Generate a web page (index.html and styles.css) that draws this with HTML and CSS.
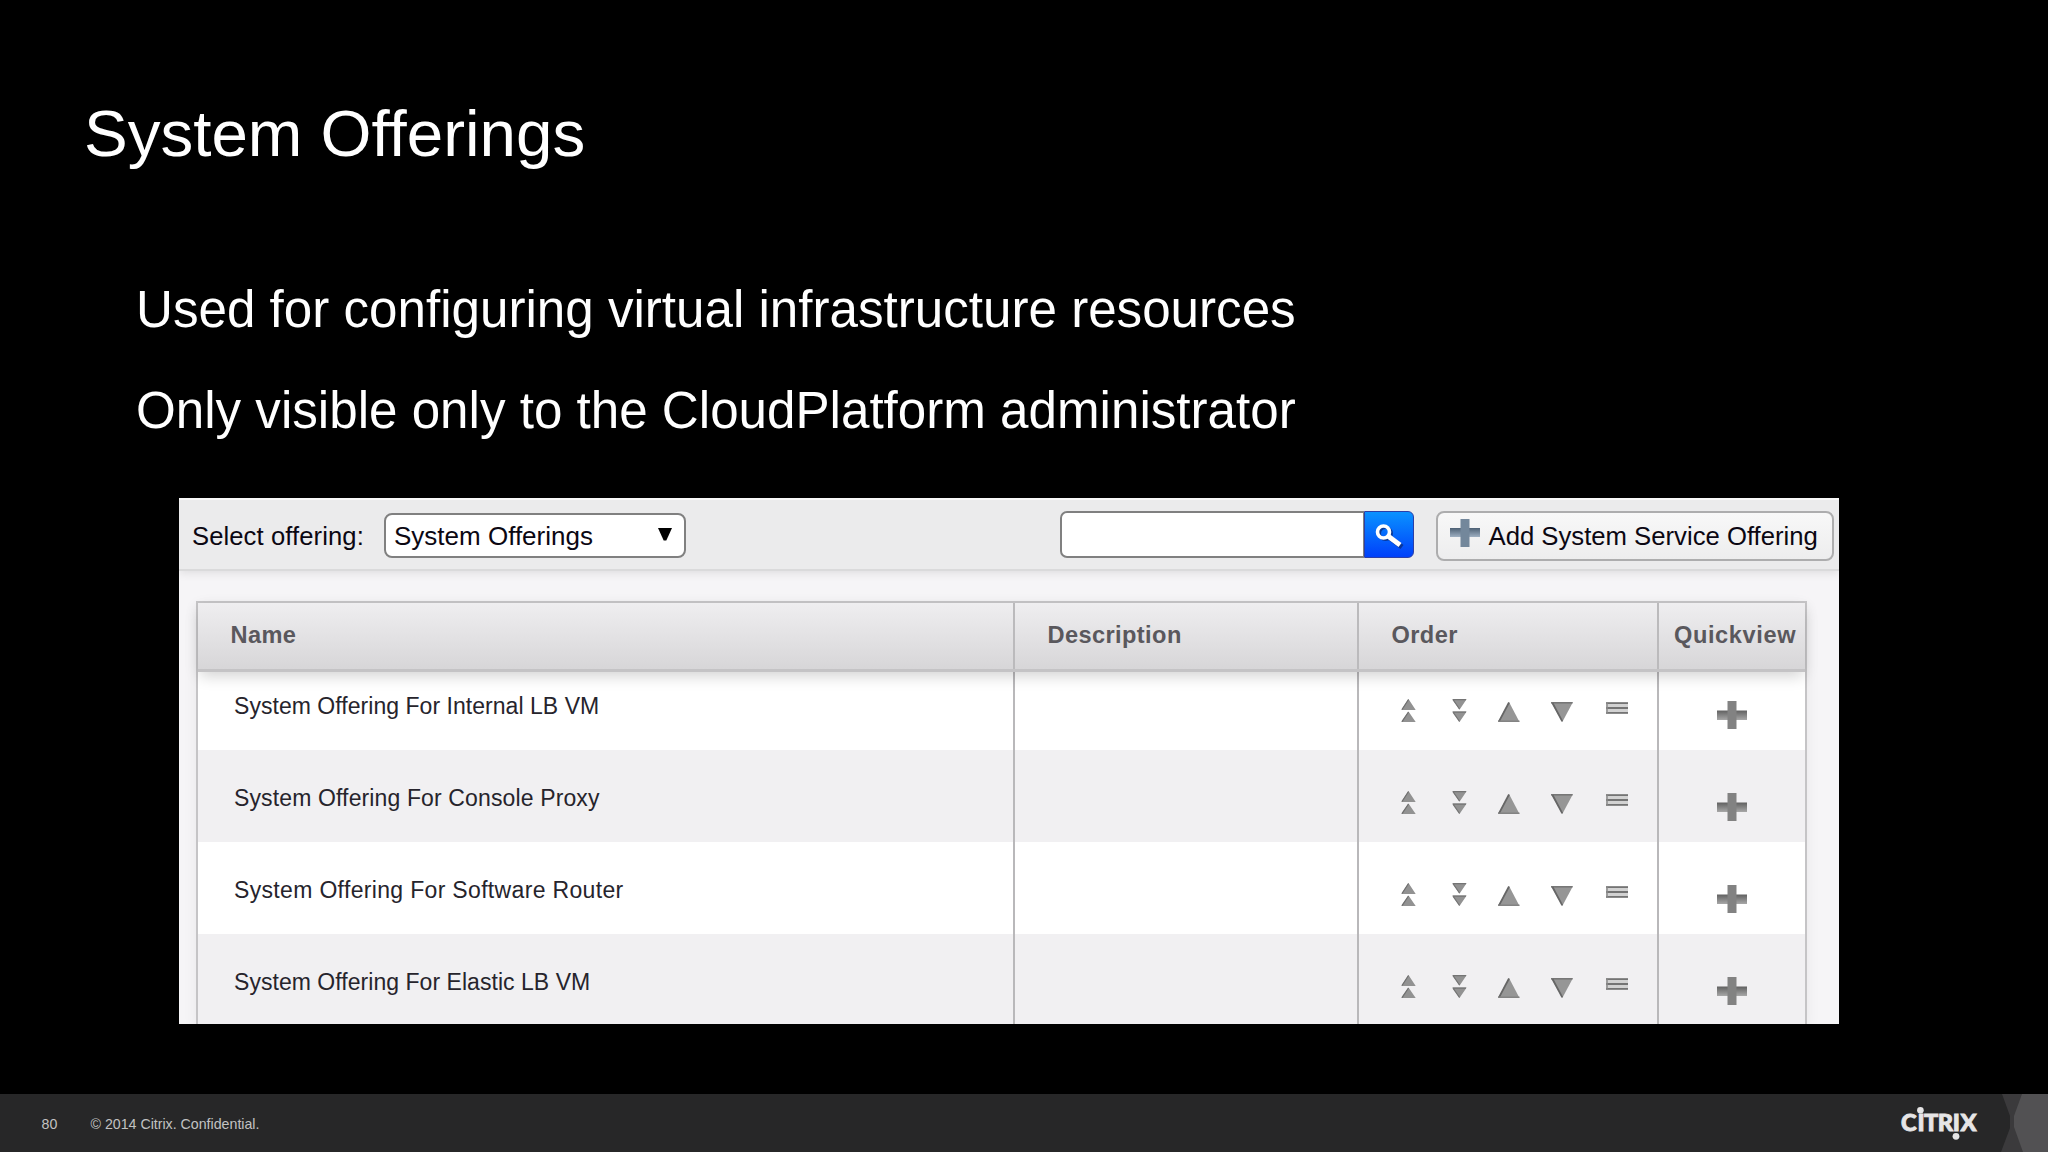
FILE: index.html
```html
<!DOCTYPE html>
<html lang="en">
<head>
<meta charset="utf-8">
<title>System Offerings</title>
<link rel="stylesheet" href="styles.css">
</head>
<body>
<svg class="defs" width="0" height="0" aria-hidden="true">
  <defs>
    <linearGradient id="bar" x1="0" y1="0" x2="0" y2="1"><stop offset="0" stop-color="#606060"/><stop offset="1" stop-color="#a8a8a8"/></linearGradient>
    <linearGradient id="bluebar" x1="0" y1="0" x2="0" y2="1"><stop offset="0" stop-color="#4d6074"/><stop offset="1" stop-color="#9fb0c2"/></linearGradient>
  </defs>
  <symbol id="top" viewBox="0 0 15 23"><path d="M7.5 0 14.7 11H0.3ZM7.5 12.5 14.7 23H0.3Z" fill="#929292"/><path d="M7.5 .5 1 10.5M7.5 13 1 22.7" stroke="#707070" stroke-width="1.3"/></symbol>
  <symbol id="bottom" viewBox="0 0 15 23"><path d="M0.3 0H14.7L7.5 10.7ZM0.3 12.5H14.7L7.5 23Z" fill="#929292"/><path d="M.8 .7H14M1 .7 7.5 10M.8 13.2H14M1 13.2 7.5 22.5" stroke="#747474" stroke-width="1.2"/></symbol>
  <symbol id="up" viewBox="0 0 22 20"><path d="M11 0 21.5 20H0Z" fill="#969696"/><path d="M11 .5 1 19.3" stroke="#666" stroke-width="1.8"/><path d="M0 19.2H21.5" stroke="#808080" stroke-width="1.3"/></symbol>
  <symbol id="down" viewBox="0 0 22 20"><path d="M0 0H22L11.3 20Z" fill="#969696"/><path d="M0 .8H21.5" stroke="#777" stroke-width="1.6"/><path d="M1.5 1 11.3 19.3" stroke="#666" stroke-width="1.8"/></symbol>
  <symbol id="drag" viewBox="0 0 22 12"><path d="M0 0H22V12H0Z" fill="#d2d2d2"/><path d="M0 1.2H22M0 6H22M0 10.8H22" stroke="#747474" stroke-width="1.8"/><path d="M1 0V12" stroke="#8a8a8a" stroke-width="1.5"/></symbol>
  <symbol id="plus" viewBox="0 0 30 28"><path d="M0 9.5H30V19H0Z" fill="url(#bar)"/><path d="M10.5 0H19.5V28H10.5Z" fill="#828282"/></symbol>
</svg>
<main class="slide">
  <h1 class="title">System Offerings</h1>
  <div class="points">
    <p class="point">Used for configuring virtual infrastructure resources</p>
    <p class="point">Only visible only to the CloudPlatform administrator</p>
  </div>
  <section class="panel">
    <div class="toolbar">
      <span class="label">Select offering:</span>
      <div class="select"><span>System Offerings</span><svg width="14" height="13" viewBox="0 0 14 13"><path d="M0 0H14L8.3 12.5H5.7Z" fill="#000"/></svg></div>
      <div class="search"><div class="field"></div><div class="go"><svg width="32" height="28" viewBox="0 0 32 28" fill="none"><g stroke="#0a2f84" opacity=".8"><circle cx="12.5" cy="10.5" r="6" stroke-width="3"/><path d="M17 15 29 24" stroke-width="5"/></g><g stroke="#fff"><circle cx="10.5" cy="9" r="6" stroke-width="3.6"/><path d="M15.3 13.3 27 22" stroke-width="5"/></g></svg></div></div>
      <div class="add"><svg width="30" height="28" viewBox="0 0 30 28"><path d="M0 9H30V18H0Z" fill="url(#bluebar)"/><path d="M10.5 0H19.5V28H10.5Z" fill="#73879b"/></svg><span>Add System Service Offering</span></div>
    </div>
    <div class="grid">
      <div class="head"><div class="c1">Name</div><div>Description</div><div>Order</div><div class="c4">Quickview</div></div>
      <div class="rows">
        <div class="row"><div class="name">System Offering For Internal LB VM</div><div></div><div class="order"><svg class="i1"><use href="#top"/></svg><svg class="i2"><use href="#bottom"/></svg><svg class="i3"><use href="#up"/></svg><svg class="i4"><use href="#down"/></svg><svg class="i5"><use href="#drag"/></svg></div><div class="quick"><svg class="i6"><use href="#plus"/></svg></div></div>
        <div class="row"><div class="name proxy">System Offering For Console Proxy</div><div></div><div class="order"><svg class="i1"><use href="#top"/></svg><svg class="i2"><use href="#bottom"/></svg><svg class="i3"><use href="#up"/></svg><svg class="i4"><use href="#down"/></svg><svg class="i5"><use href="#drag"/></svg></div><div class="quick"><svg class="i6"><use href="#plus"/></svg></div></div>
        <div class="row"><div class="name router">System Offering For Software Router</div><div></div><div class="order"><svg class="i1"><use href="#top"/></svg><svg class="i2"><use href="#bottom"/></svg><svg class="i3"><use href="#up"/></svg><svg class="i4"><use href="#down"/></svg><svg class="i5"><use href="#drag"/></svg></div><div class="quick"><svg class="i6"><use href="#plus"/></svg></div></div>
        <div class="row"><div class="name">System Offering For Elastic LB VM</div><div></div><div class="order"><svg class="i1"><use href="#top"/></svg><svg class="i2"><use href="#bottom"/></svg><svg class="i3"><use href="#up"/></svg><svg class="i4"><use href="#down"/></svg><svg class="i5"><use href="#drag"/></svg></div><div class="quick"><svg class="i6"><use href="#plus"/></svg></div></div>
      </div>
    </div>
  </section>
  <footer class="footer">
    <span class="num">80</span><span class="copy">© 2014 Citrix. Confidential.</span>
    <svg class="brand" width="158" height="58" viewBox="0 0 158 58">
      <path d="M112 0H158V58H111L120 34V22Z" fill="#3b3a3c"/>
      <path d="M132 0H158V58H133L124 33V22Z" fill="#525153"/>
      <text class="logo" y="37.4" x="11 27.4 34 47.8 62.7 70.6">CITRIX</text>
      <circle cx="30.4" cy="16.3" r="3.3" fill="#e6e5e6"/><circle cx="66" cy="42.3" r="3.4" fill="#e6e5e6"/>
    </svg>
  </footer>
</main>
</body>
</html>
```
FILE: styles.css
```css
* { box-sizing: border-box; }
body { margin: 0; background: #000; font-family: "Liberation Sans", Arial, sans-serif; }
.defs { position: absolute; }
svg { display: block; flex: none; }
.slide { width: 2048px; height: 1152px; display: flex; flex-direction: column; overflow: hidden; }
.title { margin: 96px 0 0 84px; font-size: 65.5px; line-height: 75px; font-weight: 400; color: #fff; white-space: nowrap; }
.points { margin: 109px 0 0 136px; height: 218px; }
.point { margin: 0; height: 101px; font-size: 51.15px; line-height: 59px; color: #fff; white-space: nowrap; }
.panel { margin-left: 179px; width: 1660px; height: 526px; background: #f6f5f7; overflow: hidden; flex: none; }
.toolbar { height: 73px; background: #ebebec; border-top: 2px solid #f8f8f8; border-bottom: 2px solid #dadadb; box-shadow: 0 2px 9px rgba(0,0,0,.1); display: flex; align-items: flex-start; padding: 11px 4px 0 13px; color: #0b0712; white-space: nowrap; font-size: 25.7px; }
.label { width: 192px; line-height: 50px; font-size: 25.6px; letter-spacing: .1px; }
.select { width: 302px; height: 45px; margin-top: 2px; background: #fff; border: 2px solid #808080; border-radius: 8px; display: flex; justify-content: space-between; align-items: center; padding: 0 12px 0 8px; font-size: 26px; }
.select span { padding-top: 1px; }
.select svg { margin-top: -3px; }
.search { width: 354px; height: 47px; margin-left: 374px; display: flex; }
.field { flex: 1; background: #fff; border: 2px solid #808080; border-right-width: 1px; border-radius: 7px 0 0 7px; }
.go { width: 50px; border: 1.5px solid #2b3fa8; border-radius: 0 6px 6px 0; background: linear-gradient(#0a92ff, #0040fa); padding: 11px 0 0 8px; }
.add { width: 398px; height: 50px; margin-left: 22px; display: flex; padding-left: 12px; border: 2px solid #adadae; border-radius: 8px; background: linear-gradient(#f8f8f8, #ededee); line-height: 46px; }
.add svg { margin: 6px 8.5px 0 0; }
.grid { margin: 30px 0 0 17px; width: 1611px; height: 424px; border: 2px solid #c5c4c6; border-bottom: 0; box-shadow: 0 4px 14px rgba(0,0,0,.06); }
.head, .row { display: grid; grid-template-columns: 817px 344px 300px 1fr; }
.head { position: relative; z-index: 1; height: 69px; background: linear-gradient(#efeef0, #d7d6d8); border-bottom: 3px solid #c4c3c5; box-shadow: 0 6px 14px -2px rgba(0,0,0,.18); font-size: 23.6px; letter-spacing: .4px; font-weight: 700; color: #5a585d; line-height: 65px; }
.head > div { padding-left: 32.5px; border-right: 2px solid #bbbabc; }
.head > div:last-child, .row > div:last-child { border-right: 0; }
.head .c4 { padding-left: 15px; letter-spacing: .6px; }
.rows { margin-top: -14px; }
.row { height: 92px; background: #fff; }
.row:nth-child(even) { background: #f1f0f2; }
.row > div { border-right: 2px solid #b9b8ba; }
.row .name { padding: 35px 0 0 36px; font-size: 23px; line-height: 26px; letter-spacing: .04px; color: #26242c; white-space: nowrap; }
.row .proxy { letter-spacing: .13px; }
.row .router { letter-spacing: .33px; }
.order { display: flex; padding: 41px 0 0 42px; }
.i1, .i2 { width: 15px; height: 23px; }
.i2 { margin-left: 36px; }
.i3, .i4 { width: 22px; height: 20px; margin-top: 3px; }
.i3 { margin-left: 30.5px; }
.i4 { margin-left: 31.5px; }
.i5 { width: 22px; height: 12px; margin: 3px 0 0 33px; }
.quick { padding: 43px 0 0 58px; }
.i6 { width: 30px; height: 28px; }
.footer { margin-top: 70px; height: 58px; flex: none; background: #272728; display: flex; color: #c2c2c2; font-size: 14.2px; line-height: 60px; white-space: nowrap; }
.num { width: 49px; margin-left: 41.5px; }
.brand { margin-left: auto; }
.logo { font: 900 23.6px Lato, sans-serif; fill: #e6e5e6; stroke: #e6e5e6; stroke-width: .9px; }
```
